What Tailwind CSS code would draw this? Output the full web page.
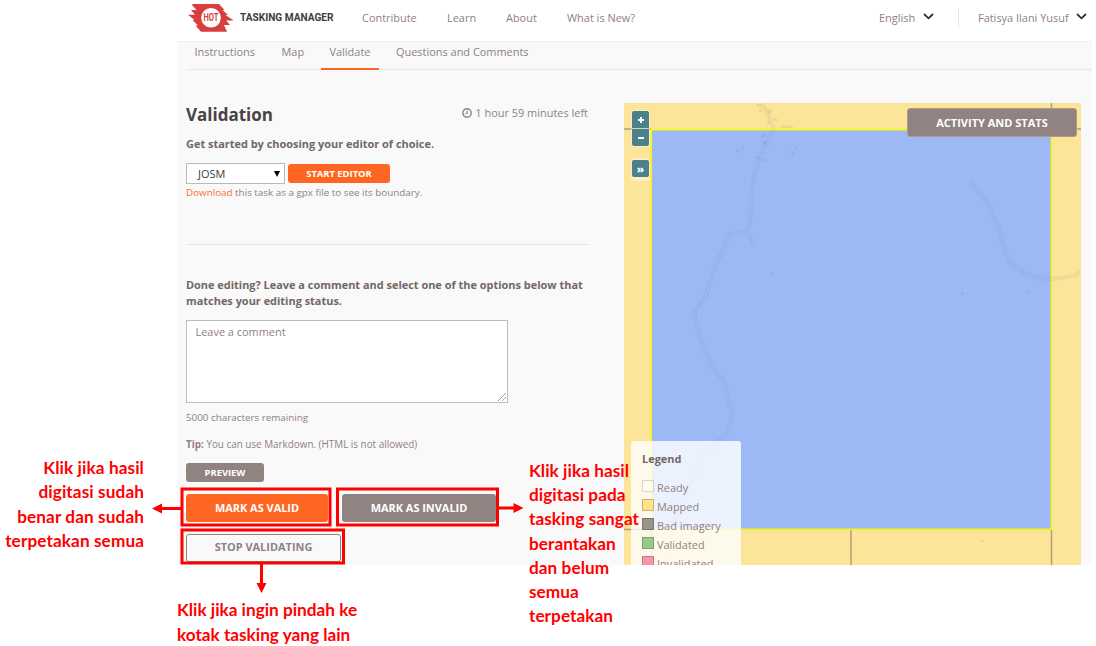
<!DOCTYPE html>
<html lang="en">
<head>
<meta charset="utf-8">
<title>Tasking Manager - Validation</title>
<script src="https://cdn.jsdelivr.net/npm/@tailwindcss/browser@4"></script>
</head>
<body class="bg-white">
<div class="relative w-[1096px] h-[646px] overflow-hidden bg-white">

  <!-- Application -->
  <div class="ml-[177px] w-[915px] h-[565px] overflow-hidden bg-[#f9f9f9] font-['Open_Sans',sans-serif] text-[10.950px] leading-[16px] text-[#8f8181] whitespace-nowrap">

    <header class="flex items-center h-[41px] bg-white pl-[11px] pb-[6px]">
      <svg class="w-[46px] h-[28px] mt-px shrink-0" viewBox="0 0 46 28">
        <path fill="#d73f3f" d="M6.500 0H31L36.500 6H34.500L40 11H37.500L45.700 16.500H38L42 21H36L39 27.700H13L7.500 21.500H10L4.500 16H6.500L0 10.700H7L3 6H8.500L3.500 .5Z"/>
        <circle cx="23" cy="13.700" r="9.800" fill="#fff"/>
        <text x="23" y="17.400" text-anchor="middle" font-family="Roboto, sans-serif" font-weight="700" font-size="10" textLength="15" lengthAdjust="spacingAndGlyphs" fill="#d73f3f">HOT</text>
      </svg>
      <span class="ml-[6px] w-[122px] font-[Roboto,sans-serif] font-bold text-[10.150px] text-[#433b3b] pt-px">TASKING MANAGER</span>
      <nav class="flex">
        <a class="w-[85px]">Contribute</a><a class="w-[59px]">Learn</a><a class="w-[61px]">About</a><a class="w-[312px]">What is New?</a>
      </nav>
      <span class="w-[44px]">English</span>
      <svg class="w-[11px] h-[7px] mb-[3px]" viewBox="0 0 11 7" fill="none" stroke="#2c3038" stroke-width="1.800"><path d="M1 1L5.500 5.300L10 1"/></svg>
      <span class="ml-[24px] w-px h-[19px] bg-[#e6e6e6]"></span>
      <span class="ml-[19px] w-[98px]">Fatisya Ilani Yusuf</span>
      <svg class="w-[11px] h-[7px] mb-[3px]" viewBox="0 0 11 7" fill="none" stroke="#2c3038" stroke-width="1.800"><path d="M1 1L5.500 5.300L10 1"/></svg>
    </header>

    <nav class="flex h-[29px] border-t border-[#efefef]">
      <div class="ml-[9px] flex flex-1 border-b border-[#e8e8e8] pl-[8.500px] pt-[2px]">
        <a class="w-[87px]">Instructions</a><a class="w-[39px]">Map</a>
        <a class="h-[26px] w-[58px] border-b-2 border-[#ff6622] pl-[9px]">Validate</a>
        <a class="ml-[17.500px]">Questions and Comments</a>
      </div>
    </nav>

    <main class="flex pl-[9px] pt-[33px]">
      <section class="w-[402px] shrink-0">
        <div class="flex items-center justify-between h-[20px]">
          <h1 class="text-[17px] font-bold leading-[20px] text-[#4b4343] pt-[3px]">Validation</h1>
          <span class="flex items-center -mt-px">
            <svg class="mr-[3px] w-[10px] h-[10px]" viewBox="0 0 10 10" fill="none" stroke="#8f8181"><circle cx="5" cy="5" r="4.200" stroke-width="1.400"/><path d="M5.300 2.500V5.400H3"/></svg>
            1 hour 59 minutes left</span>
        </div>
        <p class="mt-[13px] font-bold text-[#726767]">Get started by choosing your editor of choice.</p>
        <div class="mt-[11px] flex h-[21px] items-center gap-[3px]">
          <div class="flex h-[21px] w-[99px] items-center justify-between border border-[#b9b9b9] bg-white pl-[11px] pr-[4px] text-[#433b3b]">JOSM
            <svg class="w-[6px] h-[6px]" viewBox="0 0 6 6"><path d="M0 0H6L3 6Z" fill="#000"/></svg></div>
          <button class="h-[19px] w-[102px] rounded-[3px] bg-[#ff6622] text-[9.400px] font-bold leading-[19px] text-white">START EDITOR</button>
        </div>
        <p class="text-[9.840px]"><span class="text-[#ff6a35]">Download</span> this task as a gpx file to see its boundary.</p>
        <hr class="mt-[44px] border-[#e4e4e4]">
        <p class="mt-[32px] font-bold leading-[15.500px] text-[#726767]">Done editing? Leave a comment and select one of the options below that<br>matches your editing status.</p>
        <div class="mt-[12px] flex h-[83px] w-[322px] justify-between border border-[#bdbdbd] bg-white pl-[8.500px] pt-[3px]">Leave a comment
          <svg class="self-end w-[9px] h-[9px]" viewBox="0 0 9 9" stroke="#888" stroke-width=".8"><path d="M0 8L8 0M4 8L8 4"/></svg></div>
        <p class="mt-[5.500px] text-[9.840px]">5000 characters remaining</p>
        <p class="mt-[11.500px] text-[9.900px]"><b>Tip:</b> You can use Markdown. (HTML is not allowed)</p>
        <button class="mt-[11px] block h-[19px] w-[78px] rounded-[3px] bg-[#928383] text-[9.400px] font-bold leading-[19px] text-white">PREVIEW</button>
        <div class="mt-[12px] flex gap-[14px] text-white">
          <button class="h-[28px] w-[142px] rounded-[3px] bg-[#ff6622] font-bold">MARK AS VALID</button>
          <button class="h-[28px] w-[154px] rounded-[3px] bg-[#928383] font-bold">MARK AS INVALID</button>
        </div>
        <button class="mt-[12px] block h-[28px] w-[155px] rounded-[3px] border border-[#928383] pb-[2px] font-bold">STOP VALIDATING</button>
      </section>

      <!-- Task map -->
      <section class="relative ml-[36px] h-[462px] w-[457px] shrink-0 overflow-hidden bg-[#fce499]">
        <svg class="block" width="457" height="462" viewBox="0 0 457 462" fill="none">
          <path fill="#9db9f5" d="M27 26.500H427.500V426H27Z"/>
          <g stroke="#5b5f78" stroke-opacity=".07" stroke-linejoin="round">
            <g stroke-width="4.500">
              <path d="M137.700 0L145 13.700L150 26L139 47L131 70L127.700 88.700L126 120L123 128L102.700 132V138.700L91 163.700L82 193L70.700 208.700V215L76.700 238L88.700 263.700L101 280L103 293.700L108 307L106.700 320L102 332L79 350L68 377L56 403L46 437L44 462M123 128L130 142"/>
              <path d="M346.700 79L364 100L372.700 120L381 147L387 161L402.700 171L414 175L427.700 176L450 173L458 168"/>
            </g>
            <g stroke="#9db9f5" stroke-opacity=".5" stroke-width="2">
              <path d="M150 28L139 47L131 70L127.700 88.700L126 120L123 128L102.700 132V138.700L91 163.700L82 193L70.700 208.700V215L76.700 238L88.700 263.700L101 280L103 293.700L108 307L106.700 320L102 332L79 350L68 377L56 403M123 128L130 142"/>
              <path d="M346.700 79L364 100L372.700 120L381 147L387 161L402.700 171L414 175L427 176"/>
            </g>
          </g>
          <path fill="#4a507a" fill-opacity=".09" d="M133 1h4v3h-4zM144 6l4 1-1 4h-4zM135 6h3v3h-3zM149 15h4v3h-4zM143 18h3v3h-3zM157 22l12 1v2h-12zM137 31h4v3h-4zM138 38h5v4h-5zM112 46l4 1-1 3h-3zM117 43h3v3h-3zM131 53h4v3h-4zM139 55l4 1v3h-4zM168 48l3 1-2 4h-2zM171 45h3v2h-3zM146 169h3v3h-3zM337 189h3v3h-3zM402 188h2v3h-2zM81 184h2v3h-2zM357 437h3v2h-3z"/>
          <path stroke="#aca077" stroke-width="1.500" d="M0 26H27M427.500 26H457M427.500 0V26M0 426.500H27M27.500 427V462M227 427V462M427.500 427V462"/>
          <path stroke="#f3f61f" stroke-width="1.800" d="M27.200 26.500H427.500V426.300H27.200Z"/>
        </svg>
        <div class="absolute left-[7px] top-[7px] flex flex-col rounded-[3px] bg-white/40 p-px">
          <span class="flex h-[17px] w-[17px] items-center justify-center rounded-t-[2px] bg-[#4a818c]"><svg width="6" height="6" viewBox="0 0 6 6" stroke="#fff" stroke-width="2"><path d="M0 3H6M3 0V6"/></svg></span>
          <span class="mt-px flex h-[17px] w-[17px] items-center justify-center rounded-b-[2px] bg-[#4a818c]"><svg width="6" height="2" viewBox="0 0 6 2" stroke="#fff" stroke-width="2"><path d="M0 1H6"/></svg></span>
        </div>
        <div class="absolute left-[7px] top-[55px] h-[23px] rounded-[3px] bg-white/40 p-px text-center text-[11px] font-extrabold text-white">
          <span class="mt-px block h-[17px] w-[17px] rounded-[2px] bg-[#4a818c] leading-[18px]">»</span>
        </div>
        <div class="absolute left-[283px] top-[5px] h-[29px] w-[170px] rounded-[3px] border border-[#aa9b8c] bg-[#928383] text-center font-bold text-[11px] leading-[28px] text-white">ACTIVITY AND STATS</div>
        <div class="absolute left-[7px] top-[337.500px] h-[140px] w-[110px] rounded-t-[3px] bg-white/80 pl-[11px] pt-[10px]">
          <div class="mb-[13px] font-bold text-[#726767]">Legend</div>
          <div class="flex h-[19px] gap-[3px]"><i class="h-[12px] w-[12px] border border-black/15 bg-[#fffdf0]/60"></i><span>Ready</span></div>
          <div class="flex h-[19px] gap-[3px]"><i class="h-[12px] w-[12px] border border-black/20 bg-[#ffe28a]"></i><span>Mapped</span></div>
          <div class="flex h-[19px] gap-[3px]"><i class="h-[12px] w-[12px] border border-black/20 bg-[#97948a]"></i><span>Bad imagery</span></div>
          <div class="flex h-[19px] gap-[3px]"><i class="h-[12px] w-[12px] border border-black/20 bg-[#97ca8d]"></i><span>Validated</span></div>
          <div class="flex h-[19px] gap-[3px]"><i class="h-[12px] w-[12px] border border-black/20 bg-[#f896a6]"></i><span>Invalidated</span></div>
        </div>
      </section>
    </main>
  </div>

  <!-- Callouts laid over the application -->
  <svg class="absolute left-0 top-0" width="1096" height="646" viewBox="0 0 1096 646" fill="none" stroke="#f00" stroke-width="3">
    <path d="M182 489H330V525H182ZM337.500 489H497.500V525H337.500ZM182 530H343.500V563H182Z"/>
    <path d="M182 508.500H160M498 508H514M261.500 564V584"/>
    <path fill="#f00" stroke="none" d="M152 508.500L162 503.500V513.500ZM523.500 508L513.500 503V513ZM261.500 593L256.500 583H266.500Z"/>
  </svg>
  <p class="absolute right-[952px] top-[456px] whitespace-nowrap text-right font-[Lato,sans-serif] text-[17.200px] font-bold leading-[24.300px] tracking-[0.100px] text-[#f00]">Klik jika hasil<br>digitasi sudah<br>benar dan sudah<br>terpetakan semua</p>
  <p class="absolute left-[529px] top-[459px] whitespace-nowrap font-[Lato,sans-serif] text-[17.200px] font-bold leading-[24.200px] tracking-[0.060px] text-[#f00]">Klik jika hasil<br>digitasi pada<br>tasking sangat<br>berantakan<br>dan belum<br>semua<br>terpetakan</p>
  <p class="absolute left-[177px] top-[598px] whitespace-nowrap font-[Lato,sans-serif] text-[17.200px] font-bold leading-[24.500px] text-[#f00]">Klik jika ingin pindah ke<br>kotak tasking yang lain</p>
</div>
</body>
</html>
